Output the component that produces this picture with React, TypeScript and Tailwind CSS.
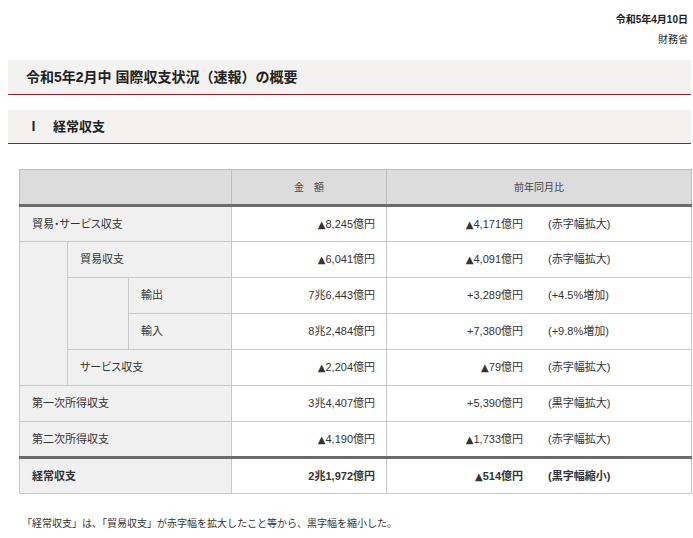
import React from "react";

const font = "font-['Liberation_Sans','Noto_Sans_CJK_JP',sans-serif]";

const cell = "border border-[#c8c8c8] p-0 align-middle";
const label = `${cell} bg-[#f0f0f0] pl-[12px] text-left [font-feature-settings:'palt']`;
const amount = `${cell} bg-white pr-[11px] text-right`;

// ▲ from DejaVu is closer in size to the reference glyph
function Num({ v }: { v: string }) {
  if (!v.startsWith("▲")) return <>{v}</>;
  return (
    <>
      <span className="font-['DejaVu_Sans',sans-serif] text-[10px]">▲</span>
      {v.slice(1)}
    </>
  );
}

function Yoy({ value, note }: { value: string; note: string }) {
  return (
    <td className={`${cell} bg-white`}>
      <div className="flex items-center">
        <span className="w-[136px] shrink-0 text-right">
          <Num v={value} />
        </span>
        <span className="ml-[25px]">{note}</span>
      </div>
    </td>
  );
}

export default function App() {
  return (
    <div className={`w-[693px] min-h-[538px] bg-white text-[#333] ${font}`}>
      <div className="pt-[10px] pr-[5px] text-right text-[10px] leading-[20px] text-[#222]">
        <p className="font-bold">令和5年4月10日</p>
        <p>財務省</p>
      </div>

      <div className="ml-[8px] mr-[2px] mt-[10px] h-[35px] flex items-center bg-[#f3f2f0] border-b border-[#8e1f2f] pl-[18px]">
        <h1 className="text-[14px] font-bold text-[#222]">令和5年2月中 国際収支状況（速報）の概要</h1>
      </div>

      <div className="ml-[8px] mr-[2px] mt-[15px] h-[34px] flex items-center bg-[#f3f2f0] border-b border-[#8e1f2f] pl-[19px]">
        <h2 className="text-[13px] font-bold text-[#222]">
          <span className="inline-block w-[26px]">Ⅰ</span>経常収支
        </h2>
      </div>

      <table className="ml-[19px] mt-[25px] w-[672px] table-fixed border-collapse text-[11px]">
        <colgroup>
          <col className="w-[48px]" />
          <col className="w-[61px]" />
          <col className="w-[103px]" />
          <col className="w-[155px]" />
          <col className="w-[305px]" />
        </colgroup>
        <thead>
          <tr className="h-[36px] bg-[#dcdcdc] text-[10px] text-[#444]">
            <th colSpan={3} className="border border-[#bdbdbd] border-b-[3px] border-b-[#6b6b6b] font-normal"></th>
            <th className="border border-[#bdbdbd] border-b-[3px] border-b-[#6b6b6b] font-normal">金　額</th>
            <th className="border border-[#bdbdbd] border-b-[3px] border-b-[#6b6b6b] font-normal">前年同月比</th>
          </tr>
        </thead>
        <tbody>
          <tr className="h-[36px]">
            <td colSpan={3} className={label}>貿易・サービス収支</td>
            <td className={amount}><Num v="▲8,245億円" /></td>
            <Yoy value="▲4,171億円" note="(赤字幅拡大)" />
          </tr>
          <tr className="h-[36px]">
            <td rowSpan={4} className={`${cell} bg-[#f0f0f0]`}></td>
            <td colSpan={2} className={label}>貿易収支</td>
            <td className={amount}><Num v="▲6,041億円" /></td>
            <Yoy value="▲4,091億円" note="(赤字幅拡大)" />
          </tr>
          <tr className="h-[36px]">
            <td rowSpan={2} className={`${cell} bg-[#f0f0f0]`}></td>
            <td className={`${label} pl-[9px]`}>輸出</td>
            <td className={amount}>7兆6,443億円</td>
            <Yoy value="+3,289億円" note="(+4.5%増加)" />
          </tr>
          <tr className="h-[36px]">
            <td className={`${label} pl-[9px]`}>輸入</td>
            <td className={amount}>8兆2,484億円</td>
            <Yoy value="+7,380億円" note="(+9.8%増加)" />
          </tr>
          <tr className="h-[36px]">
            <td colSpan={2} className={label}>サービス収支</td>
            <td className={amount}><Num v="▲2,204億円" /></td>
            <Yoy value="▲79億円" note="(赤字幅拡大)" />
          </tr>
          <tr className="h-[36px]">
            <td colSpan={3} className={label}>第一次所得収支</td>
            <td className={amount}>3兆4,407億円</td>
            <Yoy value="+5,390億円" note="(黒字幅拡大)" />
          </tr>
          <tr className="h-[36px]">
            <td colSpan={3} className={label}>第二次所得収支</td>
            <td className={amount}><Num v="▲4,190億円" /></td>
            <Yoy value="▲1,733億円" note="(赤字幅拡大)" />
          </tr>
          <tr className="h-[36px] font-bold">
            <td colSpan={3} className={`${label} border-t-[3px] border-t-[#6b6b6b]`}>経常収支</td>
            <td className={`${amount} border-t-[3px] border-t-[#6b6b6b]`}>2兆1,972億円</td>
            <td className={`${cell} bg-white border-t-[3px] border-t-[#6b6b6b]`}>
              <div className="flex items-center">
                <span className="w-[136px] shrink-0 text-right">
                  <Num v="▲514億円" />
                </span>
                <span className="ml-[25px]">(黒字幅縮小)</span>
              </div>
            </td>
          </tr>
        </tbody>
      </table>

      <p className="ml-[22px] mt-[22px] text-[10px] text-[#333]">
        「経常収支」は、「貿易収支」が赤字幅を拡大したこと等から、黒字幅を縮小した。
      </p>
    </div>
  );
}
